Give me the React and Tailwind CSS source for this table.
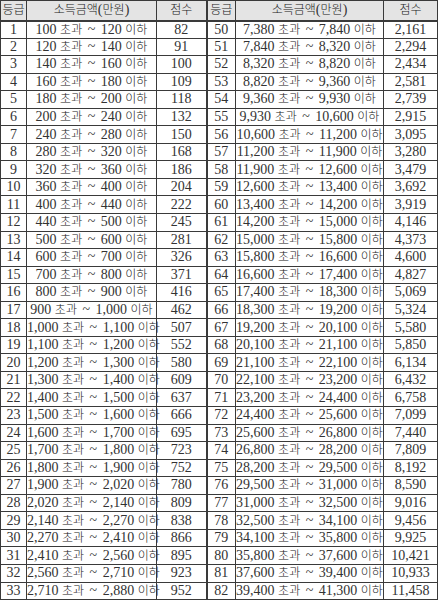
import React from "react";

const left = [
  [1, "100 초과 ~ 120 이하", "82"],
  [2, "120 초과 ~ 140 이하", "91"],
  [3, "140 초과 ~ 160 이하", "100"],
  [4, "160 초과 ~ 180 이하", "109"],
  [5, "180 초과 ~ 200 이하", "118"],
  [6, "200 초과 ~ 240 이하", "132"],
  [7, "240 초과 ~ 280 이하", "150"],
  [8, "280 초과 ~ 320 이하", "168"],
  [9, "320 초과 ~ 360 이하", "186"],
  [10, "360 초과 ~ 400 이하", "204"],
  [11, "400 초과 ~ 440 이하", "222"],
  [12, "440 초과 ~ 500 이하", "245"],
  [13, "500 초과 ~ 600 이하", "281"],
  [14, "600 초과 ~ 700 이하", "326"],
  [15, "700 초과 ~ 800 이하", "371"],
  [16, "800 초과 ~ 900 이하", "416"],
  [17, "900 초과 ~ 1,000 이하", "462"],
  [18, "1,000 초과 ~ 1,100 이하", "507"],
  [19, "1,100 초과 ~ 1,200 이하", "552"],
  [20, "1,200 초과 ~ 1,300 이하", "580"],
  [21, "1,300 초과 ~ 1,400 이하", "609"],
  [22, "1,400 초과 ~ 1,500 이하", "637"],
  [23, "1,500 초과 ~ 1,600 이하", "666"],
  [24, "1,600 초과 ~ 1,700 이하", "695"],
  [25, "1,700 초과 ~ 1,800 이하", "723"],
  [26, "1,800 초과 ~ 1,900 이하", "752"],
  [27, "1,900 초과 ~ 2,020 이하", "780"],
  [28, "2,020 초과 ~ 2,140 이하", "809"],
  [29, "2,140 초과 ~ 2,270 이하", "838"],
  [30, "2,270 초과 ~ 2,410 이하", "866"],
  [31, "2,410 초과 ~ 2,560 이하", "895"],
  [32, "2,560 초과 ~ 2,710 이하", "923"],
  [33, "2,710 초과 ~ 2,880 이하", "952"],
];

const right = [
  [50, "7,380 초과 ~ 7,840 이하", "2,161"],
  [51, "7,840 초과 ~ 8,320 이하", "2,294"],
  [52, "8,320 초과 ~ 8,820 이하", "2,434"],
  [53, "8,820 초과 ~ 9,360 이하", "2,581"],
  [54, "9,360 초과 ~ 9,930 이하", "2,739"],
  [55, "9,930 초과 ~ 10,600 이하", "2,915"],
  [56, "10,600 초과 ~ 11,200 이하", "3,095"],
  [57, "11,200 초과 ~ 11,900 이하", "3,280"],
  [58, "11,900 초과 ~ 12,600 이하", "3,479"],
  [59, "12,600 초과 ~ 13,400 이하", "3,692"],
  [60, "13,400 초과 ~ 14,200 이하", "3,919"],
  [61, "14,200 초과 ~ 15,000 이하", "4,146"],
  [62, "15,000 초과 ~ 15,800 이하", "4,373"],
  [63, "15,800 초과 ~ 16,600 이하", "4,600"],
  [64, "16,600 초과 ~ 17,400 이하", "4,827"],
  [65, "17,400 초과 ~ 18,300 이하", "5,069"],
  [66, "18,300 초과 ~ 19,200 이하", "5,324"],
  [67, "19,200 초과 ~ 20,100 이하", "5,580"],
  [68, "20,100 초과 ~ 21,100 이하", "5,850"],
  [69, "21,100 초과 ~ 22,100 이하", "6,134"],
  [70, "22,100 초과 ~ 23,200 이하", "6,432"],
  [71, "23,200 초과 ~ 24,400 이하", "6,758"],
  [72, "24,400 초과 ~ 25,600 이하", "7,099"],
  [73, "25,600 초과 ~ 26,800 이하", "7,440"],
  [74, "26,800 초과 ~ 28,200 이하", "7,809"],
  [75, "28,200 초과 ~ 29,500 이하", "8,192"],
  [76, "29,500 초과 ~ 31,000 이하", "8,590"],
  [77, "31,000 초과 ~ 32,500 이하", "9,016"],
  [78, "32,500 초과 ~ 34,100 이하", "9,456"],
  [79, "34,100 초과 ~ 35,800 이하", "9,925"],
  [80, "35,800 초과 ~ 37,600 이하", "10,421"],
  [81, "37,600 초과 ~ 39,400 이하", "10,933"],
  [82, "39,400 초과 ~ 41,300 이하", "11,458"],
];

const kr = { fontFamily: '"Noto Sans CJK KR", sans-serif' };

function Txt({ t }) {
  const parts = t.split(/([가-힣]+|~)/);
  return (
    <>
      {parts.map((p, i) => {
        if (p === "~")
          return (
            <span key={i} className="mx-[2px]">
              ~
            </span>
          );
        if (/[가-힣]/.test(p))
          return (
            <span key={i} className="text-[12px] font-light text-[#222]" style={kr}>
              {p}
            </span>
          );
        return <React.Fragment key={i}>{p}</React.Fragment>;
      })}
    </>
  );
}

const cell = "border border-[#3a3a3a] text-center whitespace-nowrap p-0";

export default function App() {
  return (
    <div className="w-[441px] h-[604px] bg-white overflow-hidden">
      <table
        className="table-fixed border-collapse text-[14px] leading-none text-[#333]"
        style={{ width: 437, fontFamily: '"Liberation Serif", "Noto Sans CJK KR", serif' }}
      >
        <colgroup>
          <col className="w-[26px]" />
          <col className="w-[130px]" />
          <col className="w-[50px]" />
          <col className="w-[29px]" />
          <col className="w-[148px]" />
          <col className="w-[54px]" />
        </colgroup>
        <thead>
          <tr className="h-[20px] bg-[#e4e4e4]">
            <th className={cell + " font-normal border-b-2"}><Txt t="등급" /></th>
            <th className={cell + " font-normal border-b-2"}><Txt t="소득금액(만원)" /></th>
            <th className={cell + " font-normal border-b-2"}><Txt t="점수" /></th>
            <th className={cell + " font-normal border-b-2 border-l-2"}><Txt t="등급" /></th>
            <th className={cell + " font-normal border-b-2"}><Txt t="소득금액(만원)" /></th>
            <th className={cell + " font-normal border-b-2"}><Txt t="점수" /></th>
          </tr>
        </thead>
        <tbody>
          {left.map((l, i) => {
            const r = right[i];
            return (
              <tr key={i} className="h-[17.55px]">
                <td className={cell}>{l[0]}</td>
                <td className={cell}><Txt t={l[1]} /></td>
                <td className={cell}>{l[2]}</td>
                <td className={cell + " border-l-2"}>{r[0]}</td>
                <td className={cell}><Txt t={r[1]} /></td>
                <td className={cell}>{r[2]}</td>
              </tr>
            );
          })}
        </tbody>
      </table>
    </div>
  );
}
